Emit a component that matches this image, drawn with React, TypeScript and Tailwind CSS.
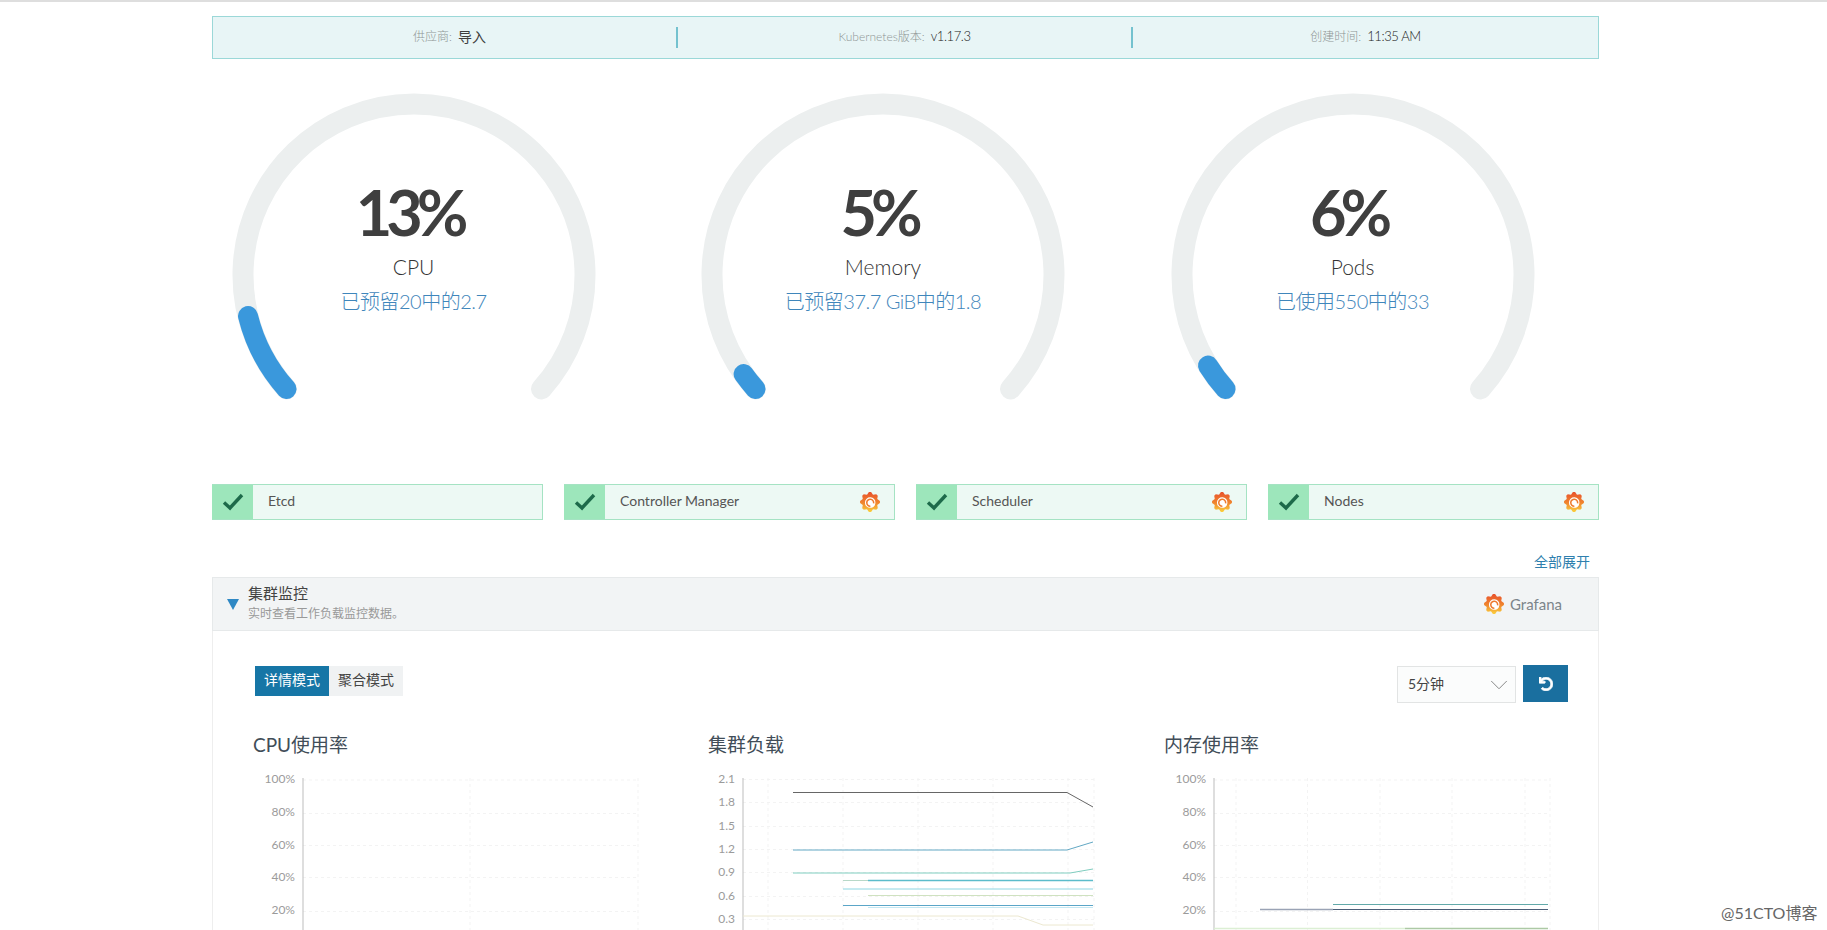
import React from 'react';
import { ChevronDown } from 'lucide-react';
import { FaUndo } from 'react-icons/fa';

type Series = { points: [number, number][]; color: string; width?: number };

const GAUGE_R = 171;
const GAUGE_C = 182;

// angle is measured in degrees from the horizontal, going clockwise from the lower left
const polar = (deg: number) => {
  const rad = (deg * Math.PI) / 180;
  return { x: GAUGE_C - GAUGE_R * Math.cos(rad), y: GAUGE_C - GAUGE_R * Math.sin(rad) };
};

const arc = (from: number, to: number) => {
  const a = polar(from);
  const b = polar(to);
  const large = to - from > 180 ? 1 : 0;
  return `M${a.x} ${a.y}A${GAUGE_R} ${GAUGE_R} 0 ${large} 1 ${b.x} ${b.y}`;
};

const gearPath = () => {
  const teeth = 8;
  const pts: string[] = [];
  for (let i = 0; i < teeth; i++) {
    const a = (i / teeth) * Math.PI * 2 - Math.PI / 2;
    const step = (Math.PI * 2) / teeth;
    [
      [a - step * 0.5, 8.6],
      [a - step * 0.14, 11],
      [a + step * 0.14, 11],
    ].forEach(([t, r]) => pts.push(`${(11 + r * Math.cos(t)).toFixed(2)},${(11 + r * Math.sin(t)).toFixed(2)}`));
  }
  return pts.join(' ');
};

const GrafanaIcon = ({ className }: { className?: string }) => (
  <svg viewBox="0 0 22 22" className={className}>
    <defs>
      <linearGradient id="grafana-grad" x1="0" y1="0" x2="0" y2="1">
        <stop offset="0" stopColor="#e8512c" />
        <stop offset="0.55" stopColor="#f0862e" />
        <stop offset="1" stopColor="#fbd03e" />
      </linearGradient>
    </defs>
    <polygon points={gearPath()} fill="url(#grafana-grad)" />
    <path d="M17 12a5.8 5.8 0 1 0-5.8 5.4c2.4 0 4-1 5-2.6" fill="#fff" />
    <path d="M15 12.4a3.8 3.8 0 1 0-3.6 3.2" fill="none" stroke="#ee7a2e" strokeWidth="1.7" />
    <circle cx="11.3" cy="12" r="1.6" fill="#fff" />
  </svg>
);

const Gauge = ({ value, name, detail, end }: { value: string; name: string; detail: string; end: number }) => (
  <div className="relative h-[320px] w-[364px]">
    <svg width="364" height="320" className="block">
      <path d={arc(-41.8, 221.8)} fill="none" stroke="#ecefef" strokeWidth="21" strokeLinecap="round" />
      <path d={arc(-41.8, end)} fill="none" stroke="#3a98dc" strokeWidth="20" strokeLinecap="round" />
    </svg>
    <div className="absolute inset-x-0 top-[87px] flex flex-col items-center">
      <div className="mr-[9px] text-[63px] leading-[64px] font-bold tracking-[-6px] text-[#3f3f3f]">{value}</div>
      <div className="mt-[9px] text-[21px] leading-[28px] font-light text-[#333]">{name}</div>
      <div className="mt-[7px] text-[20px] leading-[26px] font-light tracking-[-0.5px] text-[#3f86bb]">{detail}</div>
    </div>
  </div>
);

const StatusCard = ({ name, grafana = true }: { name: string; grafana?: boolean }) => (
  <div className="flex h-[36px] items-stretch border border-[#a5e3c3] border-l-0 bg-[#edf9f4]">
    <div className="flex w-[41px] items-center justify-center bg-[#9de6bb]">
      <svg width="22" height="18" viewBox="0 0 22 18">
        <polyline points="2,9.5 8,15 20,2" fill="none" stroke="#1d6a4a" strokeWidth="3.4" />
      </svg>
    </div>
    <div className="flex flex-1 items-center justify-between pr-[14px] pl-[15px] text-[14px] text-[#555]">
      <span className="-mt-[3px]">{name}</span>
      {grafana && <GrafanaIcon className="h-[22px] w-[20px]" />}
    </div>
  </div>
);

const InfoCell = ({ label, value, divider, latin, indent }: { label: string; value: string; divider?: boolean; latin?: boolean; indent?: boolean }) => (
  <div className="flex items-center">
    <div className={indent ? 'flex flex-1 items-center justify-center gap-[6px] pb-[2px] pl-[10px]' : 'flex flex-1 items-center justify-center gap-[6px] pb-[2px]'}>
      <span className="text-[12px] font-light text-[#8f9595]">{label}</span>
      <span className={latin ? 'text-[13px] font-light tracking-[-0.4px] text-[#222]' : 'text-[14px] text-[#3d3d3d]'}>{value}</span>
    </div>
    {divider && <div className="h-[21px] w-[2px] bg-[#74c2cf]" />}
  </div>
);

const Chart = ({
  axis,
  labels,
  gridY,
  gridX,
  series,
}: {
  axis: number;
  labels: { text: string; y: number }[];
  gridY: number[];
  gridX: number[];
  series: Series[];
}) => {
  const right = gridX[gridX.length - 1];
  return (
    <svg width="400" height="160" className="mt-[13px] block">
      {gridY.map((y) => (
        <line key={y} x1={axis} x2={right} y1={y} y2={y} stroke="#f3f3f3" strokeDasharray="3 3" />
      ))}
      {gridX.map((x) => (
        <line key={x} x1={x} x2={x} y1={8} y2={160} stroke="#f3f3f3" strokeDasharray="3 3" />
      ))}
      <line x1={axis} x2={axis} y1={8} y2={160} stroke="#bdbdbd" />
      {labels.map((l) => (
        <text key={l.text} x={axis - 8} y={l.y} textAnchor="end" dominantBaseline="central" fontSize="12" fill="#9b9b9b">
          {l.text}
        </text>
      ))}
      {series.map((s, i) => (
        <polyline
          key={i}
          points={s.points.map((p) => p.join(',')).join(' ')}
          fill="none"
          stroke={s.color}
          strokeWidth={s.width ?? 1}
        />
      ))}
    </svg>
  );
};

const percentLabels = [
  { text: '100%', y: 8 },
  { text: '80%', y: 41 },
  { text: '60%', y: 74 },
  { text: '40%', y: 106 },
  { text: '20%', y: 139 },
];
const percentGrid = [10, 43.5, 75.5, 107.5, 141.5];

const loadSeries: Series[] = [
  { points: [[85, 22.5], [359, 22.5], [385, 37]], color: '#666' },
  { points: [[85, 80], [359, 80], [385, 72]], color: '#62a8c4' },
  { points: [[85, 103], [362, 103], [385, 99]], color: '#7fcdbf' },
  { points: [[135, 110.5], [160, 110.5]], color: '#b8d8c8' },
  { points: [[160, 110.5], [385, 110.5]], color: '#5cbccb', width: 1.5 },
  { points: [[135, 119], [385, 119]], color: '#8cd5e2' },
  { points: [[160, 125.5], [385, 125.5]], color: '#cfe2c0' },
  { points: [[135, 135.5], [385, 135.5]], color: '#5ba6c8' },
  { points: [[160, 137.5], [385, 137.5]], color: '#c5e8f2' },
  { points: [[35, 146], [310, 146], [335, 155], [385, 155]], color: '#ece8d0' },
];

const memorySeries: Series[] = [
  { points: [[169, 134.5], [384, 134.5]], color: '#62a9a9' },
  { points: [[96, 139.5], [169, 139.5]], color: '#9aa3b5', width: 1.5 },
  { points: [[169, 139.5], [384, 139.5]], color: '#4d5f78' },
  { points: [[50, 158.5], [241, 158.5]], color: '#dcefd4', width: 1.5 },
  { points: [[241, 158.5], [384, 158.5]], color: '#adc9a5', width: 1.5 },
];

const App: React.FC = () => (
  <div className="relative h-[930px] overflow-hidden bg-white font-['Lato','Noto_Sans_CJK_SC',sans-serif]">
    <div className="h-[2px] bg-[#dedede]" />
    <div className="ml-[212px] w-[1387px]">
      <div className="mt-[14px] grid h-[43px] grid-cols-[465px_455px_1fr] border border-[#9bd8d8] bg-[#e8f5f6]">
        <InfoCell label="供应商:" value="导入" divider indent />
        <InfoCell label="Kubernetes版本:" value="v1.17.3" divider latin />
        <InfoCell label="创建时间:" value="11:35 AM" latin />
      </div>

      <div className="mt-[34px] flex gap-[105.5px] pl-[19.5px]">
        <Gauge value="13%" name="CPU" detail="已预留20中的2.7" end={-13.9} />
        <Gauge value="5%" name="Memory" detail="已预留37.7 GiB中的1.8" end={-35.4} />
        <Gauge value="6%" name="Pods" detail="已使用550中的33" end={-32} />
      </div>

      <div className="mt-[71px] grid grid-cols-4 gap-x-[21px]">
        <StatusCard name="Etcd" grafana={false} />
        <StatusCard name="Controller Manager" />
        <StatusCard name="Scheduler" />
        <StatusCard name="Nodes" />
      </div>

      <div className="flex h-[57px] items-end justify-end pr-[9px] pb-[6px] text-[14px] leading-[18px] text-[#2f7fae]">
        全部展开
      </div>

      <div className="flex h-[54px] items-center border border-[#e6e9ea] bg-[#f2f4f5] pr-[36px] pl-[14px]">
        <svg width="12" height="11" viewBox="0 0 12 11">
          <polygon points="0,0 12,0 6,11" fill="#2f88c4" />
        </svg>
        <div className="ml-[9px] flex-1 pb-[2px]">
          <div className="text-[15px] leading-[20px] text-[#444]">集群监控</div>
          <div className="mt-[2px] text-[12px] leading-[18px] text-[#999]">实时查看工作负载监控数据。</div>
        </div>
        <GrafanaIcon className="h-[22px] w-[20px]" />
        <span className="ml-[6px] text-[15px] text-[#7c858b]">Grafana</span>
      </div>

      <div className="border-x border-[#eeeeee] pt-[35px]">
        <div className="flex items-start justify-between pr-[30px] pl-[42px]">
          <div className="flex text-[14px] leading-[28px]">
            <div className="h-[30px] w-[74px] bg-[#1676a6] text-center text-white">详情模式</div>
            <div className="h-[30px] w-[74px] bg-[#f0f2f3] text-center text-[#444]">聚合模式</div>
          </div>
          <div className="flex items-start gap-[7px]">
            <div className="flex h-[37px] w-[119px] items-center justify-between border border-[#e2e4e4] bg-[#fbfcfc] pr-[1px] pl-[10px] text-[14px] text-[#444]">
              <span className="-mt-[2px]">5分钟</span>
              <ChevronDown size={30} strokeWidth={0.8} className="text-[#888]" />
            </div>
            <button className="-mt-px flex h-[37px] w-[45px] items-center justify-center bg-[#1a6f9f] text-white">
              <FaUndo size={14} stroke="currentColor" strokeWidth={30} />
            </button>
          </div>
        </div>

        <div className="mt-[30px] grid grid-cols-[455px_456px_1fr] pl-[40px]">
          <div>
            <h3 className="text-[19px] leading-[24px] font-normal text-[#414d58]">CPU使用率</h3>
            <Chart axis={50} labels={percentLabels} gridY={percentGrid} gridX={[217, 385]} series={[]} />
          </div>
          <div>
            <h3 className="text-[19px] leading-[24px] font-normal text-[#414d58]">集群负载</h3>
            <Chart
              axis={35}
              labels={[
                { text: '2.1', y: 8 },
                { text: '1.8', y: 31 },
                { text: '1.5', y: 55 },
                { text: '1.2', y: 78 },
                { text: '0.9', y: 101 },
                { text: '0.6', y: 125 },
                { text: '0.3', y: 148 },
              ]}
              gridY={[9.5, 32.5, 56.5, 79.5, 102.5, 126.5, 149.5]}
              gridX={[60, 135, 210, 285, 360, 386]}
              series={loadSeries}
            />
          </div>
          <div>
            <h3 className="text-[19px] leading-[24px] font-normal text-[#414d58]">内存使用率</h3>
            <Chart axis={50} labels={percentLabels} gridY={percentGrid} gridX={[72, 143.5, 216, 288, 361, 386]} series={memorySeries} />
          </div>
        </div>
      </div>
    </div>
    <div className="absolute top-[902px] left-[1721px] text-[16px] leading-[22px] text-[#666]">@51CTO博客</div>
  </div>
);

export default App;
